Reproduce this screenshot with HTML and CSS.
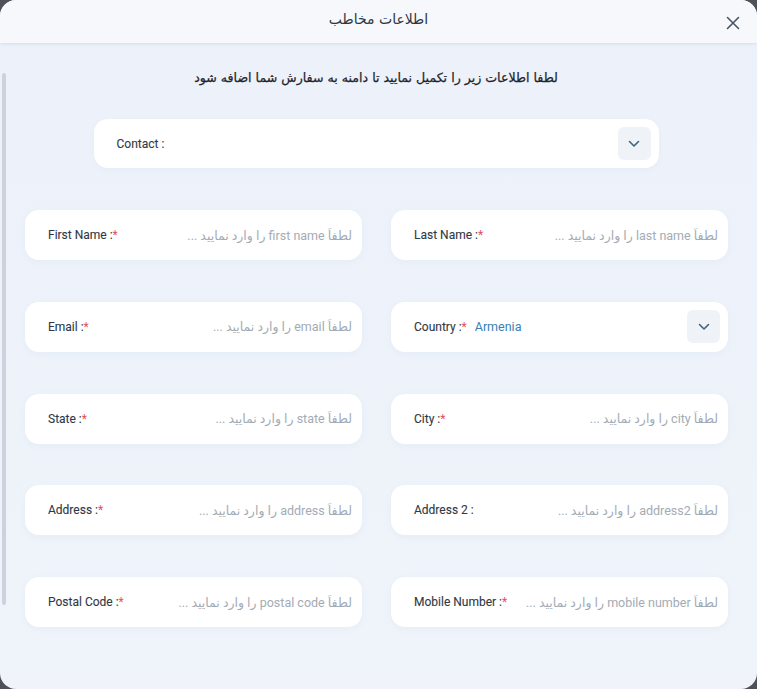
FILE: index.html
```html
<!DOCTYPE html>
<html lang="fa">
<head>
<meta charset="utf-8">
<title>اطلاعات مخاطب</title>
<link rel="stylesheet" href="styles.css">
</head>
<body>
<div class="modal">
  <header class="modal-head">
    <span class="spacer"></span>
    <h1 class="title">اطلاعات مخاطب</h1>
    <button class="close" aria-label="close">
      <svg width="14" height="14" viewBox="0 0 14 14"><path d="M1.5 1.5 L12.5 12.5 M12.5 1.5 L1.5 12.5" stroke="#4a5563" stroke-width="1.6" stroke-linecap="round" fill="none"/></svg>
    </button>
  </header>
  <div class="modal-body">
    <div class="scroll-thumb"></div>
    <p class="subtitle">لطفا اطلاعات زیر را تکمیل نمایید تا دامنه به سفارش شما اضافه شود</p>
    <div class="field contact">
      <span class="label">Contact :</span>
      <span class="value"></span>
      <span class="chev"><svg width="12" height="8" viewBox="0 0 12 8"><path d="M1.5 1.5 L6 6 L10.5 1.5" stroke="#3d6680" stroke-width="1.6" fill="none" stroke-linecap="round" stroke-linejoin="round"/></svg></span>
    </div>
    <div class="grid">
      <div class="field"><span class="label">First Name :<i>*</i></span><span class="ph">لطفاً first name را وارد نمایید ...</span></div>
      <div class="field"><span class="label">Last Name :<i>*</i></span><span class="ph">لطفاً last name را وارد نمایید ...</span></div>
      <div class="field"><span class="label">Email :<i>*</i></span><span class="ph">لطفاً email را وارد نمایید ...</span></div>
      <div class="field select"><span class="label">Country :<i>*</i></span><span class="sel">Armenia</span><span class="chev"><svg width="12" height="8" viewBox="0 0 12 8"><path d="M1.5 1.5 L6 6 L10.5 1.5" stroke="#3d6680" stroke-width="1.6" fill="none" stroke-linecap="round" stroke-linejoin="round"/></svg></span></div>
      <div class="field"><span class="label">State :<i>*</i></span><span class="ph">لطفاً state را وارد نمایید ...</span></div>
      <div class="field"><span class="label">City :<i>*</i></span><span class="ph">لطفاً city را وارد نمایید ...</span></div>
      <div class="field"><span class="label">Address :<i>*</i></span><span class="ph">لطفاً address را وارد نمایید ...</span></div>
      <div class="field"><span class="label">Address 2 :</span><span class="ph">لطفاً address2 را وارد نمایید ...</span></div>
      <div class="field"><span class="label">Postal Code :<i>*</i></span><span class="ph">لطفاً postal code را وارد نمایید ...</span></div>
      <div class="field"><span class="label">Mobile Number :<i>*</i></span><span class="ph">لطفاً mobile number را وارد نمایید ...</span></div>
    </div>
  </div>
</div>
</body>
</html>
```
FILE: styles.css
```css
html, body {
  margin: 0;
  padding: 0;
  background: #4e5258;
}
body {
  font-family: Roboto, "DejaVu Sans", sans-serif;
  color: #343d48;
}
.modal {
  width: 757px;
  height: 689px;
  border-radius: 16px;
  overflow: hidden;
  background: linear-gradient(180deg, #edf2fa 0%, #eef3fa 60%, #f0f4fa 100%);
  display: flex;
  flex-direction: column;
}
.modal-head {
  height: 43px;
  flex: none;
  display: grid;
  grid-template-columns: 1fr auto 1fr;
  align-items: center;
  background: #f6f8fc;
  box-shadow: 0 1px 3px rgba(160, 180, 205, 0.35);
  position: relative;
  z-index: 1;
}
.title {
  margin: 0;
  font-family: "DejaVu Sans", sans-serif;
  font-size: 14px;
  font-weight: 500;
  color: #2f3640;
  padding-bottom: 5px;
}
.close {
  justify-self: end;
  margin-right: 17px;
  margin-top: 2px;
  border: none;
  background: none;
  padding: 0;
  width: 14px;
  height: 14px;
  display: flex;
}
.modal-body {
  position: relative;
  flex: 1;
  padding: 0 30px 0 25px;
}
.scroll-thumb {
  position: absolute;
  left: 2px;
  top: 30px;
  width: 4px;
  height: 532px;
  background: #cdd3dd;
  border-radius: 2px;
}
.subtitle {
  margin: 25px 0 0;
  height: 20px;
  line-height: 20px;
  text-align: center;
  direction: rtl;
  font-family: "DejaVu Sans", sans-serif;
  font-size: 12.6px;
  font-weight: 400;
  color: #1f252d;
  -webkit-text-stroke: 0.25px #1f252d;
}
.field {
  background: #ffffff;
  border-radius: 14px;
  height: 50px;
  display: flex;
  align-items: center;
  padding: 0 10px 0 23px;
  box-shadow: 0 2px 6px rgba(170, 190, 215, 0.12);
  box-sizing: border-box;
}
.contact {
  width: 565px;
  height: 49px;
  margin: 31px auto 0;
  padding: 0 8px 0 23px;
}
.label {
  font-size: 12px;
  font-weight: 400;
  color: #2f3844;
  white-space: nowrap;
  -webkit-text-stroke: 0.1px #2f3844;
}
.label i {
  font-style: normal;
  color: #e0505f;
  -webkit-text-stroke: 0;
}
.value {
  flex: 1;
}
.ph {
  flex: 1;
  direction: rtl;
  text-align: right;
  font-family: Roboto, "DejaVu Sans", sans-serif;
  font-size: 12.5px;
  color: #a3abb5;
  white-space: nowrap;
  overflow: hidden;
}
.sel {
  flex: 1;
  margin-left: 8px;
  font-size: 12.5px;
  color: #3a7fb6;
}
.chev {
  width: 33px;
  height: 33px;
  border-radius: 6px;
  background: #eff3f7;
  display: flex;
  align-items: center;
  justify-content: center;
}
.select {
  padding-right: 8px;
}
.grid {
  margin-top: 42px;
  display: grid;
  grid-template-columns: 337px 337px;
  column-gap: 29px;
  row-gap: 41.75px;
}
```
